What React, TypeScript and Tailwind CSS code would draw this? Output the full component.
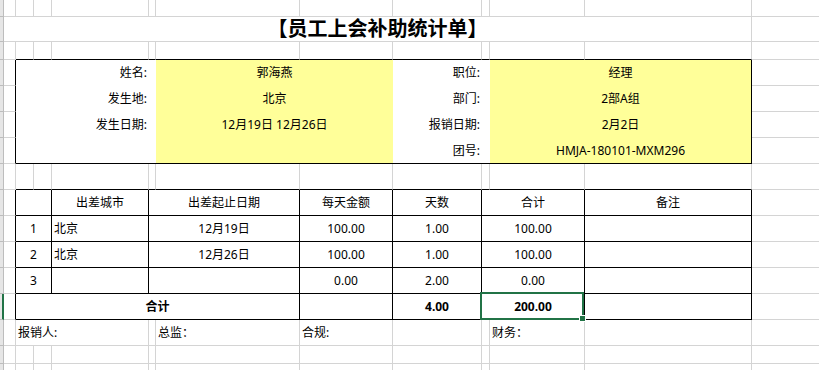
import React from 'react';

type Line = 'g' | 'k' | 'n';

const R: Record<Line, string> = {
  g: 'border-r border-r-[#d4d4d4]',
  k: 'border-r border-r-black',
  n: '',
};

const B: Record<Line, string> = {
  g: 'border-b border-b-[#d4d4d4]',
  k: 'border-b border-b-black',
  n: '',
};

// column widths, each one includes its right gridline
const W = {
  A: 'w-[12px]',
  B: 'w-[18px]',
  C: 'w-[18px]',
  D: 'w-[97px]',
  E: 'w-[7px]',
  F: 'w-[144px]',
  G: 'w-[93px]',
  H: 'w-[89px]',
  I: 'w-[8px]',
  J: 'w-[95px]',
  K: 'w-[167px]',
};

const COLS = ['B', 'C', 'D', 'E', 'F', 'G', 'H', 'I', 'J', 'K'] as const;

const Cell: React.FC<{
  w: string;
  r?: Line;
  b?: Line;
  className?: string;
  children?: React.ReactNode;
}> = ({ w, r = 'g', b = 'g', className = '', children }) => (
  <div className={`${w} shrink-0 flex items-center whitespace-nowrap ${R[r]} ${B[b]} ${className}`}>
    {children}
  </div>
);

const Hd: React.FC<{ sel?: boolean }> = ({ sel }) => (
  <div
    className={`w-[4px] shrink-0 bg-[#e6e6e6] border-b border-b-[#bdbdbd] ${
      sel ? 'border-r-2 border-r-[#217346]' : 'border-r border-r-[#bdbdbd]'
    }`}
  />
);

const Plain: React.FC<{ h: string; kb?: boolean }> = ({ h, kb }) => (
  <div className={`flex ${h}`}>
    <Hd />
    <Cell w={W.A} />
    {COLS.map((c) => (
      <Cell key={c} w={W[c]} b={kb ? 'k' : 'g'} />
    ))}
    <Cell w="flex-1" r="n" />
  </div>
);

const info = [
  ['姓名:', '郭海燕', '职位:', '经理'],
  ['发生地:', '北京', '部门:', '2部A组'],
  ['发生日期:', '12月19日 12月26日', '报销日期:', '2月2日'],
  ['', '', '团号:', 'HMJA-180101-MXM296'],
];

const trips = [
  { n: '1', city: '北京', date: '12月19日', daily: '100.00', days: '1.00', total: '100.00' },
  { n: '2', city: '北京', date: '12月26日', daily: '100.00', days: '1.00', total: '100.00' },
  { n: '3', city: '', date: '', daily: '0.00', days: '2.00', total: '0.00' },
];

export default function App() {
  return (
    <div className="h-screen w-full overflow-hidden bg-white text-[12px] leading-none text-black font-['Noto_Sans','Noto_Sans_CJK_SC',sans-serif]">
      <Plain h="h-[17px]" />

      {/* title */}
      <div className="flex h-[25px]">
        <Hd />
        <Cell w="w-[748px]" className="justify-center text-[20px] font-bold">
          【员工上会补助统计单】
        </Cell>
        <Cell w="flex-1" r="n" />
      </div>

      <Plain h="h-[18px]" kb />

      {/* header info block */}
      {info.map((row, i) => {
        const b: Line = i === info.length - 1 ? 'k' : 'n';
        return (
          <div key={i} className="flex h-[26px]">
            <Hd />
            <Cell w={W.A} r="k" />
            <Cell w="w-[133px]" r="n" b={b} className="justify-end pr-[2px]">
              {row[0]}
            </Cell>
            <Cell w={W.E} r="n" b={b} />
            <Cell w="w-[237px]" r="n" b={b} className="justify-center bg-[#ffff99]">
              {row[1]}
            </Cell>
            <Cell w={W.H} r="n" b={b} className="justify-end pr-[2px]">
              {row[2]}
            </Cell>
            <Cell w={W.I} r="n" b={b} />
            <Cell w="w-[262px]" r="k" b={b} className="justify-center bg-[#ffff99]">
              {row[3]}
            </Cell>
            <Cell w="flex-1" r="n" />
          </div>
        );
      })}

      <Plain h="h-[26px]" kb />

      {/* expense table */}
      <div className="flex h-[26px]">
        <Hd />
        <Cell w={W.A} r="k" />
        <Cell w="w-[36px]" r="k" b="k" />
        <Cell w={W.D} r="k" b="k" className="justify-center">出差城市</Cell>
        <Cell w="w-[151px]" r="k" b="k" className="justify-center">出差起止日期</Cell>
        <Cell w={W.G} r="k" b="k" className="justify-center">每天金额</Cell>
        <Cell w={W.H} r="k" b="k" className="justify-center">天数</Cell>
        <Cell w="w-[103px]" r="k" b="k" className="justify-center">合计</Cell>
        <Cell w={W.K} r="k" b="k" className="justify-center">备注</Cell>
        <Cell w="flex-1" r="n" />
      </div>
      {trips.map((t) => (
        <div key={t.n} className="flex h-[26px]">
          <Hd />
          <Cell w={W.A} r="k" />
          <Cell w="w-[36px]" r="k" b="k" className="justify-center">{t.n}</Cell>
          <Cell w={W.D} r="k" b="k" className="pl-[2px]">{t.city}</Cell>
          <Cell w="w-[151px]" r="k" b="k" className="justify-center">{t.date}</Cell>
          <Cell w={W.G} r="k" b="k" className="justify-center">{t.daily}</Cell>
          <Cell w={W.H} r="k" b="k" className="justify-center">{t.days}</Cell>
          <Cell w="w-[103px]" r="k" b="k" className="justify-center">{t.total}</Cell>
          <Cell w={W.K} r="k" b="k" />
          <Cell w="flex-1" r="n" />
        </div>
      ))}
      <div className="flex h-[26px]">
        <Hd sel />
        <Cell w={W.A} r="k" />
        <Cell w="w-[284px]" r="k" b="k" className="justify-center font-bold">合计</Cell>
        <Cell w={W.G} r="k" b="k" />
        <Cell w={W.H} r="k" b="k" className="justify-center font-bold">4.00</Cell>
        <Cell w="w-[103px]" r="k" b="k" className="relative justify-center font-bold">
          200.00
          <div className="absolute z-10 -left-[2px] -top-[2px] right-0 -bottom-[1px] border-2 border-[#217346]" />
          <div className="absolute z-10 -right-[2px] -bottom-[3px] w-[7px] h-[7px] bg-[#217346] border border-white" />
        </Cell>
        <Cell w={W.K} r="k" b="k" />
        <Cell w="flex-1" r="n" />
      </div>

      {/* signatures */}
      <div className="flex h-[26px]">
        <Hd />
        <Cell w={W.A} />
        <Cell w="w-[133px]" className="pl-[2px]">报销人:</Cell>
        <Cell w={W.E} />
        <Cell w={W.F} className="pl-[2px]">总监：</Cell>
        <Cell w={W.G} className="pl-[2px]">合规:</Cell>
        <Cell w={W.H} />
        <Cell w={W.I} />
        <Cell w={W.J} className="pl-[2px]">财务：</Cell>
        <Cell w={W.K} />
        <Cell w="flex-1" r="n" />
      </div>

      <Plain h="h-[18px]" />
      <Plain h="h-[26px]" />
    </div>
  );
}
